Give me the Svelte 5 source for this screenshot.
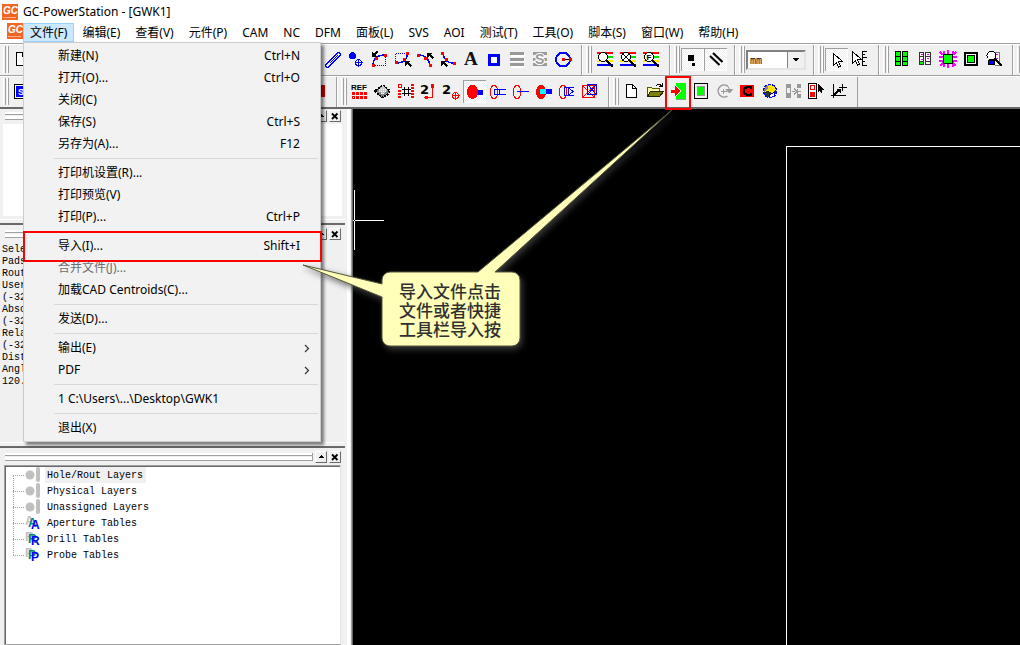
<script>
  const menus = ['文件(F)', '编辑(E)', '查看(V)', '元件(P)', 'CAM', 'NC', 'DFM', '面板(L)', 'SVS', 'AOI', '测试(T)', '工具(O)', '脚本(S)', '窗口(W)', '帮助(H)'];

  const fileMenu = [
    { t: '新建(N)', k: 'Ctrl+N' },
    { t: '打开(O)...', k: 'Ctrl+O' },
    { t: '关闭(C)' },
    { t: '保存(S)', k: 'Ctrl+S' },
    { t: '另存为(A)...', k: 'F12' },
    null,
    { t: '打印机设置(R)...' },
    { t: '打印预览(V)' },
    { t: '打印(P)...', k: 'Ctrl+P' },
    null,
    { t: '导入(I)...', k: 'Shift+I', marked: true },
    { t: '合并文件(J)...', off: true },
    { t: '加载CAD Centroids(C)...' },
    null,
    { t: '发送(D)...' },
    null,
    { t: '输出(E)', sub: true },
    { t: 'PDF', sub: true },
    null,
    { t: '1 C:\\Users\\...\\Desktop\\GWK1' },
    null,
    { t: '退出(X)' }
  ];

  const lens = (inner) => `<path d="M2 4h16" stroke="red" stroke-width="2"/><path d="M8 8h10" stroke="#0d0" stroke-width="2"/><path d="M2 12h16" stroke="#fe0" stroke-width="2"/><path d="M2 16h16" stroke="#00f" stroke-width="2"/><path d="M11 11l7 7" stroke="#000" stroke-width="2"/><circle cx="8" cy="8" r="4.500" fill="#fff" stroke="#000"/>${inner}`;
  const txt = (x, y, s, t, c = '#000', f = 'Liberation Sans') => `<text x="${x}" y="${y}" font-family="${f}" font-weight="700" font-size="${s}" fill="${c}">${t}</text>`;
  const cursor = (x, y) => `<path transform="translate(${x} ${y})" d="M.5 .5v12l3-3 2 4.500 2-1-2-4.500h4z" fill="#fff" stroke="#000"/>`;
  const page = '<path d="M4.500 3.500h6l4 4v9h-10z" fill="#fff" stroke="#000"/><path d="M10.500 3.500v4h4" fill="none" stroke="#000"/>';
  const target = (x, y, c) => `<circle cx="${x}" cy="${y}" r="3" fill="none" stroke="${c}"/><path d="M${x - 4} ${y}h8M${x} ${y - 4}v8" stroke="${c}"/>`;
  const red = (...p) => p.map(([x, y]) => `<rect x="${x - 1.5}" y="${y - 1.5}" width="3" height="3" fill="red"/>`).join('');
  const head = (x, y) => `<path transform="translate(${x} ${y})" d="M0 0h5l-1.500 1.500 3 3-1.500 1.500-3-3L0 5z" fill="#000"/>`;
  const headDown = (x, y) => `<path transform="translate(${x} ${y})" d="M0 6V1l1.500 1.500 3-3L6 1 3 4l2 2z" fill="#000"/>`;
  const ring = '<ellipse cx="6" cy="11" rx="4" ry="6.500" fill="none" stroke="red"/>';
  const rays = 'M2 3l3 3M5.500 2v4M10 1v5M14.500 2v4M18 3l-3 3M1 8h4M1 12h4M15 8h4M15 12h4M2 17l3-3M5.500 18v-4M10 19v-5M14.500 18v-4M18 17l-3-3';

  const icons = {
    page,
    pencil: '<path d="M4.500 16.500l11-11" stroke="#00f" stroke-width="5" stroke-linecap="round"/><path d="M4.500 16.500l11-11" stroke="#f0f0f0" stroke-width="2.800" stroke-linecap="round"/><path d="M7 14l8-8" stroke="#00f"/>',
    dots: '<circle cx="6.500" cy="6.500" r="3.500" fill="#00f"/>' + target(12.5, 13.5, '#00f'),
    arc1: '<path d="M16.500 6v10.500H5" fill="none" stroke="#00f" stroke-dasharray="1 1"/><path d="M4 17c0-7 4-11 12-11" fill="none" stroke="#00f" stroke-width="1.500"/>' + red([4.5, 16.5], [7.5, 9.5], [16.5, 6.5]) + headDown(3, 2),
    arc2: '<path d="M3.500 14V4.500H15" fill="none" stroke="#00f" stroke-dasharray="1 1"/><path d="M15 5c0 6-4 9-11 9" fill="none" stroke="#00f" stroke-width="1.500"/>' + red([15.5, 4.5], [12.5, 10.5], [4.5, 13.5]) + head(13, 12),
    arc3: '<path d="M3 6c8 0 11 4 12 11" fill="none" stroke="#00f" stroke-width="1.500"/>' + red([3.5, 6.5], [10.5, 9.5], [15.5, 16.5]) + head(12, 4),
    arc4: '<path d="M5 4c1 6 3 10 11 10" fill="none" stroke="#00f" stroke-width="1.500"/>' + red([4.5, 4.5], [8.5, 10.5], [16.5, 14.5]) + head(3, 12),
    letter: txt(3, 16, 19, 'A', '#111', 'Liberation Serif'),
    rect: '<rect x="5.500" y="6.500" width="9" height="9" fill="#fff" stroke="#00f" stroke-width="3"/>',
    bars: '<path d="M4 6h14M4 11.500h14M4 17h14" stroke="#fff" stroke-width="3"/><path d="M3 4.500h14M3 10.500h14M3 15.500h14" stroke="#999" stroke-width="3"/>',
    barsS: '<path d="M3 4.500h14M3 10.500h14M3 15.500h14" stroke="#999" stroke-width="3"/><text x="5" y="15" font-family="Liberation Sans" font-weight="700" font-size="14" fill="#999" stroke="#fff" stroke-width="2" paint-order="stroke">S</text>',
    circle: '<circle cx="10" cy="10.500" r="7" fill="none" stroke="#00f" stroke-width="2"/><path d="M10 10.500h6" stroke="#000"/>' + red([10.5, 10.5], [17.5, 10.5]),
    lens: lens(''),
    lensX: lens('<path d="M5 5l6 6M11 5l-6 6" stroke="#000"/>'),
    lensF: lens(txt(5.5, 11, 8, 'F')),
    dot: '<path d="M5 6h6v6H5zM9 14h3v3H9z" fill="#000"/>',
    hatch: '<g shape-rendering="auto" stroke="#000" stroke-width="2"><path d="M7 4l9.500 9"/><path d="M4 7l9.500 9"/></g>',
    cursor: cursor(6, 4),
    ruler: '<path d="M12.500 2v15M12 2.500h5M12 5.500h3M12 8.500h5M12 12.500h3M12 16.500h5" stroke="#000"/>' + cursor(2, 2),
    grid: '<path d="M3 2h6v15H3zM10 2h6v15h-6z" fill="#000"/><path d="M4 3h4v4H4zM11 3h4v4h-4zM4 8h4v4H4zM11 8h4v4h-4zM4 13h4v3H4zM11 13h4v3h-4z" fill="#0f0"/>',
    grid2: '<path d="M4 3h5v13H4zM10 3h6v13h-6z" fill="#333"/><path d="M5 4h3v3H5zM11 4h4v3h-4zM5 8h3v4H5zM11 8h4v4h-4zM11 13h4v2h-4z" fill="#fff"/><path d="M5 13h3v2H5z" fill="#0f0"/><path d="M6 5.500h2M12 5.500h2M6 10.500h2M12 9.500h2" stroke="#f0f"/>',
    burst: `<path d="${rays}" stroke="#f0f" stroke-width="2"/><rect x="5.500" y="5.500" width="9" height="9" fill="#0f0" stroke="#000"/>`,
    square: '<rect x="4" y="4" width="12" height="12" fill="#fff" stroke="#000" stroke-width="2"/><rect x="6.500" y="6.500" width="7" height="7" fill="#0f0" stroke="#000"/>',
    inspect: '<path d="M10.500 3.500h5v13h-5" fill="#fff" stroke="#777"/><path d="M12 5.500h2M12 9.500h2" stroke="#f0f"/><path d="M4.500 11.500h6v4h-6z" fill="#00f" stroke="#000"/><path d="M11 10l7 7" stroke="#000" stroke-width="2"/><circle cx="7.500" cy="6.500" r="4.500" fill="#fff" stroke="#000"/>',
    blueS: '<rect x="2.500" y="3.500" width="16" height="14" fill="#fff" stroke="#000"/><rect x="4" y="5" width="13" height="11" fill="#00f"/>' + txt(6, 14, 9, 'S', '#fff'),
    redEnd: '<rect x="3" y="4" width="14" height="12" fill="#d00000"/>',
    ref: txt(1, 9, 8, 'REF') + '<path d="M2 12h16M2 16.500h16" stroke="red" stroke-width="3" stroke-dasharray="3 1"/><path d="M2.500 15.500h2v2h-2z" fill="#fff" stroke="red"/>',
    chip: '<path d="M10 4.500l7 5.500-3 4-4 2.500-4-2.500-4-4z" fill="#888" stroke="#000" stroke-width="2" stroke-dasharray="2 1"/><path d="M10 5l5 4-5 4-5-4z" fill="#ccc"/><path d="M6 8.500h7M6 10.500h8M8 12.500h4" stroke="#fff" stroke-dasharray="1 1"/>',
    hash: '<path d="M3.500 9v9M16.500 3v15" stroke="red" stroke-width="3" stroke-dasharray="2 1"/><rect x="2.500" y="3.500" width="3" height="3" fill="#f0f0f0" stroke="red"/><path d="M8.500 6v9M12.500 6v9M6 8.500h9M6 12.500h9" stroke="#000"/>',
    two1: txt(1, 13, 13, '2', '#000', 'DejaVu Sans') + '<path d="M13.500 4v12.500H7" fill="none" stroke="red"/><circle cx="13.500" cy="5" r="2" fill="red"/><circle cx="7.500" cy="16.500" r="2" fill="red"/>',
    two2: txt(0, 13, 13, '2', '#000', 'DejaVu Sans') + target(13.5, 14.5, 'red'),
    pad1: '<path d="M10 9h8v5h-8z" fill="#00f"/><ellipse cx="7.500" cy="11" rx="5.500" ry="7" fill="red"/>',
    pad2: ring + '<path d="M18 8.500H6.500v5H18M11.500 9v4" fill="none" stroke="#00f"/>',
    pad3: ring + '<path d="M6 10.500h12" stroke="#00f"/>',
    pad4: '<ellipse cx="7" cy="11" rx="5" ry="7" fill="red"/><path d="M6 8h6v5H6z" fill="#0ff"/><path d="M12 8h6v5h-6z" fill="#00f"/>',
    pad5: ring + '<path d="M17 6.500H7.500v8H17M11.500 7v7M12 7l4 3.500-4 3.500" fill="none" stroke="#00f"/>',
    pad6: '<rect x="2.500" y="4.500" width="12" height="12" fill="none" stroke="red"/><path d="M2.500 4.500l12 12M14.500 4.500l-12 12" stroke="red"/><rect x="7.500" y="3.500" width="9" height="10" fill="none" stroke="#00f"/><path d="M7.500 3.500l9 10M16.500 3.500l-9 10" stroke="#00f"/>',
    folder: '<path d="M2.500 15.500v-9h4l1 1h7v3" fill="#ffff99" stroke="#555500"/><path d="M2.500 15.500l3-5h13l-4 5z" fill="#808000" stroke="#222200"/><path d="M11 5c2-3 4-2 5.500 0M17.500 2v3.500h-4" fill="none" stroke="#000"/>',
    import: '<path d="M8 2h10v16H8z" fill="#0f0"/><path d="M17.500 2v16H8" fill="none" stroke="#999"/><path d="M7 3l6 7-6 7z" fill="#f0f0f0"/><path d="M3 8.500h4V5l6 5-6 5v-3.500H3z" fill="red"/>',
    film: '<rect x="3.500" y="2.500" width="13" height="15" fill="#f0f0f0" stroke="#000"/><rect x="6.500" y="5.500" width="7" height="9" fill="#0f0" stroke="#999"/>',
    redo: '<g shape-rendering="auto"><path d="M13.500 5a6 6 0 1 0 0 10" fill="none" stroke="#999" stroke-width="1.500"/><path d="M12 8.500h6.500l-3 3.500zM13 4l3 5" fill="#999" stroke="#999"/></g><path d="M7 10.500h6M9.500 8v5" stroke="#999"/>',
    redC: '<rect x="3" y="4" width="14" height="12" fill="red"/><path d="M14 8V6h-4L7 8v4l3 2h4v-2" fill="none" stroke="#000" stroke-width="2"/>',
    globe: '<circle cx="10" cy="10" r="6.500" fill="#ffe600" stroke="#00f" stroke-width="1.500" stroke-dasharray="3 1"/><path d="M4 11l4-1 4 2 4-3v3l-4 4H7z" fill="#333"/><path d="M9 14l6-3-1 4-4 2z" fill="#fff" stroke="#00f"/><path d="M5 6l4-2-2 5-3 2z" fill="#888"/>',
    step: '<path d="M3 3h5v14H3zM14 3h4v4h-4zM14 13h4v4h-4z" fill="#999"/><path d="M4 7h3v5H4z" fill="#f0f0f0"/><path d="M9 10.500h3M14 8v5M11 7.500l3 3-3 3M15 10.500h3" fill="none" stroke="#999"/>',
    pick: '<rect x="2.500" y="2.500" width="8" height="15" fill="#fff" stroke="#000"/><rect x="4.500" y="4.500" width="4" height="4" fill="none" stroke="red"/><path d="M4 11h5v5H4z" fill="red"/><path d="M12 3v8l2-2 1 3 1.500-.5-1-3H18z" fill="#000"/>',
    axes: '<path d="M4.500 3v14M2 14.500h15" stroke="#000"/><path d="M10 6.500h8M13.500 3v7" stroke="#000"/><path d="M5 14l5-5" stroke="#000" stroke-width="1.500"/><path d="M7 8h5v5z" fill="#000"/>'
  };

  const row1 = [
    ['pencil', 'dots', 'arc1', 'arc2', 'arc3', 'arc4', 'letter', 'rect', 'bars', 'barsS', 'circle'],
    ['lens', 'lensX', 'lensF'],
    ['dot', 'hatch'],
    'unit',
    ['cursor', 'ruler'],
    ['grid', 'grid2', 'burst', 'square', 'inspect']
  ];
  const row2 = [
    ['ref', 'chip', 'hash', 'two1', 'two2', 'pad1', 'pad2', 'pad3', 'pad4', 'pad5', 'pad6'],
    ['page', 'folder', 'import', 'film', 'redo', 'redC', 'globe', 'step', 'pick', 'axes']
  ];
  const pressed = new Set(['dot', 'hatch', 'cursor', 'pad1']);

  const readout = ['Selected: 0', 'Pads: 0', 'Routs: 0', 'User Origin', '(-32.5, 0)', 'Absolute', '(-32.5, 0)', 'Relative', '(-32.5, 0)', 'Distance', 'Angle', '120.000'];
  const layers = [
    ['Hole/Rout Layers', ''],
    ['Physical Layers', ''],
    ['Unassigned Layers', ''],
    ['Aperture Tables', 'A'],
    ['Drill Tables', 'R'],
    ['Probe Tables', 'P']
  ];
</script>

{#snippet tool(name)}
  <button class="tool" class:pressed={pressed.has(name)} class:marked={name === 'import'} aria-label={name}>
    <svg width="20" height="20" viewBox="0 0 20 20" fill="none" shape-rendering="crispEdges">{@html icons[name]}</svg>
  </button>
{/snippet}

{#snippet logo()}
  <svg class="logo" width="16" height="16" viewBox="0 0 16 16" aria-hidden="true">
    <rect width="16" height="16" fill="#f26522" />
    <text x="1" y="10" font-family="Liberation Sans" font-weight="700" font-style="italic" font-size="10" fill="#fff">GC</text>
    <path d="M1 13.500h13" stroke="#f9b08c" />
  </svg>
{/snippet}

{#snippet caption()}
  <div class="caption">
    <span class="rails"></span>
    <button aria-label="collapse"><svg width="10" height="10" viewBox="0 0 10 10" shape-rendering="crispEdges"><path d="M2 6h6L5 3z" /></svg></button>
    <button aria-label="close"><svg width="10" height="10" viewBox="0 0 10 10"><path d="M2 2.500l5.500 5.500M7.500 2.500L2 8" stroke="#000" stroke-width="1.800" /></svg></button>
  </div>
{/snippet}

<div class="app">
  <header class="title">{@render logo()}<span>GC-PowerStation - [GWK1]</span></header>

  <nav class="menubar">
    {@render logo()}
    {#each menus as m, i}
      <div class="entry">
        <button class="top" class:open={i === 0}>{m}</button>
        {#if i === 0}
          <div class="drop">
            {#each fileMenu as f}
              {#if f}
                <button class="item" class:boxed={f.marked} disabled={f.off}>
                  <span>{f.t}</span>
                  {#if f.k}<span class="key">{f.k}</span>{/if}
                  {#if f.sub}<svg class="more" width="6" height="9" viewBox="0 0 6 9"><path d="M1 1l3.500 3.500L1 8" fill="none" stroke="#333" stroke-width="1.200" /></svg>{/if}
                </button>
              {:else}
                <hr />
              {/if}
            {/each}
          </div>
        {/if}
      </div>
    {/each}
  </nav>

  <div class="bar">
    <div class="group">
      <span class="grip"></span>
      {@render tool('page')}
      <span class="wide"></span>
      {#each row1[0] as n}{@render tool(n)}{/each}
    </div>
    {#each row1.slice(1) as g}
      <div class="group">
        <span class="grip"></span>
        {#if g === 'unit'}
          <select aria-label="unit"><option>mm</option></select>
        {:else}
          {#each g as n}{@render tool(n)}{/each}
        {/if}
      </div>
    {/each}
    <div class="group last"><span class="grip"></span></div>
  </div>
  <div class="bar">
    <div class="group">
      <span class="grip"></span>
      {@render tool('blueS')}
      <span class="mid"></span>
      {@render tool('redEnd')}
    </div>
    {#each row2 as g}
      <div class="group">
        <span class="grip"></span>
        {#each g as n}{@render tool(n)}{/each}
      </div>
    {/each}
  </div>

  <div class="work">
    <aside class="dock">
      <section class="panel preview">
        {@render caption()}
        <div class="blank"></div>
      </section>
      <section class="panel info">
        {@render caption()}
        <div class="readout">{#each readout as r}<div>{r}</div>{/each}</div>
      </section>
      <section class="panel layers">
        {@render caption()}
        <ul class="tree">
          {#each layers as [name, letter], i}
            <li>
              <svg width="16" height="16" viewBox="0 0 16 16">
                {#if letter}
                  <g font-family="Liberation Sans" font-size="12" font-weight="700">
                    <text x="0" y="10" fill="#c0c0c0">{letter}</text>
                    <text x="3" y="12" fill="#008080">{letter}</text>
                    <text x="6" y="14" fill="#00f">{letter}</text>
                  </g>
                {:else}
                  <circle cx="5" cy="8" r="4.500" fill="#c0c0c0" /><rect x="11" y="0" width="4" height="15" rx="2" fill="#c0c0c0" />
                {/if}
              </svg>
              <span class:current={i === 0}>{name}</span>
            </li>
          {/each}
        </ul>
      </section>
    </aside>
    <main class="canvas">
      <div class="board"></div>
      <svg class="cross" width="32" height="60" viewBox="0 0 32 60"><path d="M1.500 0v60M0 30.500h31" stroke="#fff" /><path d="M1 30.500h1" stroke="#000" /></svg>
    </main>
  </div>

  <div class="callout">
    <svg width="380" height="250" viewBox="0 0 380 250" aria-hidden="true">
      <path d="M372 2L195 164H212a8 8 0 0 1 8 8v58a8 8 0 0 1-8 8H90a8 8 0 0 1-8-8V189L3 157 82 176v-4a8 8 0 0 1 8-8h88z" fill="#ffffb9" stroke="#55553c" />
    </svg>
    <p>导入文件点击<br />文件或者快捷<br />工具栏导入按</p>
  </div>
</div>

<style>
  :global(body) { margin: 0; }
  .app {
    position: relative;
    display: flex;
    flex-direction: column;
    height: 100vh;
    overflow: hidden;
    background: #f0f0f0;
    color: #000;
    font: 12px/18px "Noto Sans", "Noto Sans CJK SC", sans-serif;
  }
  button { font: inherit; color: inherit; border: 0; padding: 0; margin: 0; background: none; }
  .title { display: flex; align-items: center; gap: 5px; height: 23px; padding-left: 2px; background: #fff; }
  .logo { flex: none; }
  .menubar { display: flex; height: 19px; padding: 0 0 1px 7px; background: #fff; white-space: nowrap; }
  .entry { position: relative; }
  .entry + .entry { margin-left: 1px; }
  .top { height: 19px; padding: 0 7px; display: block; }
  .top.open { background: #cce8ff; box-shadow: inset 0 0 0 1px #99d1ff; }
  .drop {
    position: absolute;
    z-index: 5;
    top: 19px;
    left: 0;
    width: 298px;
    box-sizing: border-box;
    padding: 2px;
    background: #f2f2f2;
    border: 1px solid #ccc;
    box-shadow: 3px 3px 3px rgba(0, 0, 0, .5);
  }
  .item { position: relative; display: flex; align-items: center; width: 100%; height: 22px; padding: 0 18px 0 32px; text-align: left; }
  .item:disabled { color: #6d6d6d; }
  .key { margin-left: auto; }
  .more { margin-left: auto; margin-right: -10px; }
  .boxed::after { content: ""; position: absolute; inset: -4px -4px -5px -3px; border: 2px solid red; }
  hr { height: 1px; margin: 3px 0 3px 28px; border: 0; background: #d7d7d7; }

  .bar { display: flex; height: 30px; border-top: 1px solid #a0a0a0; box-shadow: inset 0 1px #fff; padding-top: 1px; }
  .group { display: flex; align-items: flex-start; flex: none; padding: 3px 7px 0 0; }
  .group + .group { border-left: 1px solid #a0a0a0; box-shadow: inset 1px 0 #fff; padding-left: 4px; }
  .group:first-child { padding-left: 3px; }
  .group:last-child:not(.last) { border-right: 1px solid #a0a0a0; }
  .grip { width: 7px; height: 27px; margin-top: -2px; flex: none; background: linear-gradient(90deg, #fff 1px, #f0f0f0 1px 2px, #a0a0a0 2px 3px, #f0f0f0 3px 4px, #fff 4px 5px, #a0a0a0 5px 6px, transparent 6px); }
  .wide { width: 288px; }
  .mid { width: 273px; }
  .tool { position: relative; box-sizing: border-box; width: 23px; height: 23px; padding: 1px 1px 2px 2px; flex: none; }
  .tool svg { display: block; }
  .pressed { background: repeating-conic-gradient(#fff 0 25%, #f0f0f0 0 50%) 0 0 / 2px 2px; box-shadow: inset 1px 1px #a0a0a0, inset -1px -1px #fff; }
  .marked::after { content: ""; position: absolute; inset: -4px -2px -7px -1px; border: 2px solid red; z-index: 3; }
  select {
    appearance: none;
    width: 60px;
    height: 20px;
    margin-top: 2px;
    padding: 0 2px;
    border: 2px solid;
    border-color: #808080 #e3e3e3 #e3e3e3 #808080;
    border-radius: 0;
    font: 10px "DejaVu Sans Mono", monospace;
    color: #000;
    background:
      linear-gradient(to bottom left, #000 50%, transparent 50%) right 8px center / 4px 4px no-repeat,
      linear-gradient(to bottom right, #000 50%, transparent 50%) right 4px center / 4px 4px no-repeat,
      linear-gradient(#f0f0f0, #f0f0f0) right / 16px 100% no-repeat,
      linear-gradient(#808080, #808080) right / 17px 100% no-repeat,
      #fff;
  }

  .work { flex: 1; display: flex; min-height: 0; border-top: 2px solid #696969; }
  .dock { flex: none; display: flex; flex-direction: column; width: 352px; border-right: 1px solid #696969; box-shadow: inset -1px 0 #a0a0a0, inset -2px 0 #f0f0f0, inset -5px 0 #fff; }
  .panel { width: 345px; box-sizing: border-box; padding: 3px 0 0; }
  .preview, .info { border-bottom: 2px solid #696969; box-shadow: inset 0 -3px #f0f0f0, inset 0 -4px #fff; }
  .preview { height: 116px; padding-top: 1px; }
  .info { height: 223px; }
  .layers { flex: 1; display: flex; flex-direction: column; }
  .caption { display: flex; align-items: center; gap: 2px; height: 12px; padding: 0 4px 0 5px; }
  .rails { flex: 1; height: 7px; border: 1px solid #a0a0a0; border-width: 0 1px 1px 0; background: linear-gradient(#fff 2px, #a0a0a0 2px 3px, #f0f0f0 3px 4px, #fff 4px); }
  .caption button { width: 12px; height: 12px; border: 1px solid; border-color: #fff #696969 #696969 #fff; box-sizing: border-box; }
  .caption svg { display: block; }
  .blank { height: 92px; margin: 2px 3px; background: #fff; }
  .readout { padding: 0 2px; margin-top: 4px; font: 10px/12px "Liberation Mono", monospace; white-space: nowrap; }
  .tree { flex: 1; list-style: none; margin: 2px 4px 0; padding: 1px 0 0; background: #fff; border: 1px solid #a0a0a0; border-right-color: #e3e3e3; box-shadow: inset 1px 1px #696969; font: 10px/15px "Liberation Mono", monospace; }
  .tree li { position: relative; display: flex; align-items: center; height: 16px; padding-left: 20px; gap: 4px; }
  .tree li svg { overflow: visible; }
  .tree li::before { content: ""; position: absolute; left: 8px; top: 8px; width: 11px; height: 16px; border: 1px dotted #a0a0a0; border-width: 1px 0 0 1px; box-sizing: border-box; }
  .tree li:last-child::before { border-left: 0; }
  .tree li span { padding: 1px 3px 0 2px; }
  .current { background: #f0f0f0; }
  .canvas { flex: 1; position: relative; background: #000; overflow: hidden; }
  .board { position: absolute; left: 433px; right: -2px; top: 37px; bottom: -2px; border: 1px solid #fff; }
  .cross { position: absolute; left: 0; top: 81px; }

  .callout { position: absolute; z-index: 6; left: 300px; top: 108px; pointer-events: none; }
  .callout svg { display: block; filter: drop-shadow(2px 3px 3px rgba(70, 70, 70, .8)); }
  .callout p { position: absolute; left: 99px; top: 173px; margin: 0; font: 500 17px/19px "Noto Sans CJK SC", sans-serif; color: #303030; white-space: nowrap; }
</style>
